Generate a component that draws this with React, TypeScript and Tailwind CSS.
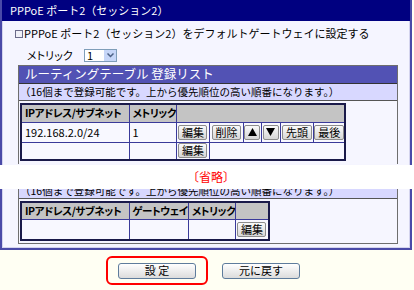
import React from 'react'

const FONT = "font-['Noto_Sans_CJK_JP',sans-serif]"

function Btn({ children, w = 'w-[29px]' }: { children: React.ReactNode; w?: string }) {
  return (
    <button
      className={`${w} h-[15px] flex items-center justify-center text-[11px] leading-none text-black bg-gradient-to-b from-[#fafafa] to-[#d6d6d6] border border-[#8c8c8c] rounded-[2px]`}
    >
      {children}
    </button>
  )
}

function Tri({ up }: { up?: boolean }) {
  return (
    <svg width="9" height="8" viewBox="0 0 9 8">
      <polygon points={up ? '4.5,0 9,8 0,8' : '0,0 9,0 4.5,8'} fill="#000" />
    </svg>
  )
}

const td = 'border border-[#3a3a9a] p-0 align-middle leading-none'
const th =
  "border border-[#3a3a9a] bg-[#c4c4c4] p-0 pl-[3px] text-left font-bold text-[10.5px] leading-none whitespace-nowrap overflow-hidden tracking-[-0.4px] [font-feature-settings:'palt']"

export default function App() {
  return (
    <div className={`w-[414px] h-[290px] overflow-hidden bg-[#fffff3] text-black text-[11px] ${FONT}`}>
      {/* upper part of panel */}
      <div className="w-[412px] border-x-2 border-[#4a4aa8] bg-[#f5f5ff]">
        <div className="h-[21px] bg-[#000080] text-white text-[11px] pl-[8px] flex items-center">
          PPPoE ポート2（セッション2）
        </div>
        <div className="border-x border-[#d4d4ee]">
          <div className="h-[24px] flex items-center pl-[12px] pt-[1px]">
            <span className="w-[8px] h-[8px] border border-[#6b6b8a] bg-[#f0f0f8] mr-[1px]" />
            <span className="whitespace-nowrap">PPPoE ポート2（セッション2）をデフォルトゲートウェイに設定する</span>
          </div>
          <div className="h-[20px] flex items-center pl-[24px]">
            <span className="w-[57px] [font-feature-settings:'palt']">メトリック</span>
            <div className="w-[33px] h-[13px] border border-[#7f9db9] bg-white flex items-center">
              <span className="flex-1 pl-[2px] text-[11px] leading-none">1</span>
              <span className="w-[12px] h-[11px] bg-[#c6d6f8] flex items-center justify-center">
                <svg width="7" height="5" viewBox="0 0 7 5">
                  <polyline points="0.5,0.5 3.5,3.5 6.5,0.5" fill="none" stroke="#4d6185" strokeWidth="1.5" />
                </svg>
              </span>
            </div>
          </div>

          <div className="ml-[15px] w-[380px] border-x border-t border-[#6e6e6e]">
            <div className="h-[18px] bg-[#5252b4] text-white text-[12.5px] pl-[6px] flex items-center border-b border-[#333]">
              ルーティングテーブル 登録リスト
            </div>
            <div className="h-[17px] bg-[#d8d8ff] pl-[1px] flex items-center border-b border-[#555] whitespace-nowrap text-[10.5px]">
              （16個まで登録可能です。上から優先順位の高い順番になります。）
            </div>
            <div className="bg-[#f6f6ff] pl-[1px] pt-[2px] pb-[3px]">
              <table className="border-collapse table-fixed border-2 border-[#1a1a4a] bg-[#f8f8ff]">
                <tbody>
                  <tr className="h-[18px]">
                    <th className={`${th} w-[108px]`}>IPアドレス/サブネット</th>
                    <th className={`${th} w-[44px]`}>メトリック</th>
                    <th className={th} colSpan={6}></th>
                  </tr>
                  <tr className="h-[20px]">
                    <td className={`${td} pl-[3px]`}>192.168.2.0/24</td>
                    <td className={`${td} pl-[3px]`}>1</td>
                    <td className={`${td} w-[33px]`}>
                      <div className="flex justify-center"><Btn>編集</Btn></div>
                    </td>
                    <td className={`${td} w-[34px]`}>
                      <div className="flex justify-center"><Btn>削除</Btn></div>
                    </td>
                    <td className={`${td} w-[18px]`}>
                      <div className="flex justify-center"><Btn w="w-[16px]"><Tri up /></Btn></div>
                    </td>
                    <td className={`${td} w-[19px]`}>
                      <div className="flex justify-center"><Btn w="w-[16px]"><Tri /></Btn></div>
                    </td>
                    <td className={`${td} w-[33px]`}>
                      <div className="flex justify-center"><Btn w="w-[30px]">先頭</Btn></div>
                    </td>
                    <td className={`${td} w-[32px]`}>
                      <div className="flex justify-center"><Btn w="w-[30px]">最後</Btn></div>
                    </td>
                  </tr>
                  <tr className="h-[18px]">
                    <td className={td}></td>
                    <td className={td}></td>
                    <td className={td}>
                      <div className="flex justify-center"><Btn>編集</Btn></div>
                    </td>
                    <td className={td} colSpan={5}></td>
                  </tr>
                </tbody>
              </table>
            </div>
          </div>
          <div className="h-[1px]" />
        </div>
      </div>

      {/* omitted part */}
      <div className="h-[24px] bg-white flex items-center pl-[187px] text-[12px] text-[#ff0000]">
        〔省略〕
      </div>

      {/* lower part of panel */}
      <div className="w-[412px] border-x-2 border-b-2 border-[#4a4aa8] bg-[#f5f5ff]">
        <div className="border-x border-b border-[#d4d4ee] pb-[3px]">
          <div className="ml-[15px] w-[380px] border-x border-b border-[#6e6e6e]">
            <div className="h-[10px] overflow-hidden bg-[#d8d8ff] pl-[1px] border-b border-[#555] whitespace-nowrap text-[10.5px]">
              <div className="-mt-[7px] leading-[17px]">
                （16個まで登録可能です。上から優先順位の高い順番になります。）
              </div>
            </div>
            <div className="bg-[#f6f6ff] pl-[1px] pt-[2px] pb-[2px]">
              <table className="border-collapse table-fixed border-2 border-[#1a1a4a] bg-[#f8f8ff]">
                <tbody>
                  <tr className="h-[17px]">
                    <th className={`${th} w-[108px]`}>IPアドレス/サブネット</th>
                    <th className={`${th} w-[56px]`}>ゲートウェイ</th>
                    <th className={`${th} w-[45px]`}>メトリック</th>
                    <th className={`${th} w-[33px]`}></th>
                  </tr>
                  <tr className="h-[21px]">
                    <td className={td}></td>
                    <td className={td}></td>
                    <td className={td}></td>
                    <td className={td}>
                      <div className="flex justify-center"><Btn>編集</Btn></div>
                    </td>
                  </tr>
                </tbody>
              </table>
            </div>
          </div>
        </div>
      </div>

      {/* buttons */}
      <div className="flex items-center pt-[6px] pl-[106px] gap-[14px]">
        <div className="w-[102px] h-[29px] border-2 border-[#ff0000] rounded-[6px] flex items-center justify-center">
          <button className="w-[78px] h-[16px] text-[11px] leading-none bg-gradient-to-b from-white to-[#dcdcdc] border border-[#5e7c9c] rounded-[3px]">
            設 定
          </button>
        </div>
        <button className="w-[78px] h-[16px] text-[11px] leading-none bg-gradient-to-b from-white to-[#dcdcdc] border border-[#5e7c9c] rounded-[3px]">
          元に戻す
        </button>
      </div>
    </div>
  )
}
